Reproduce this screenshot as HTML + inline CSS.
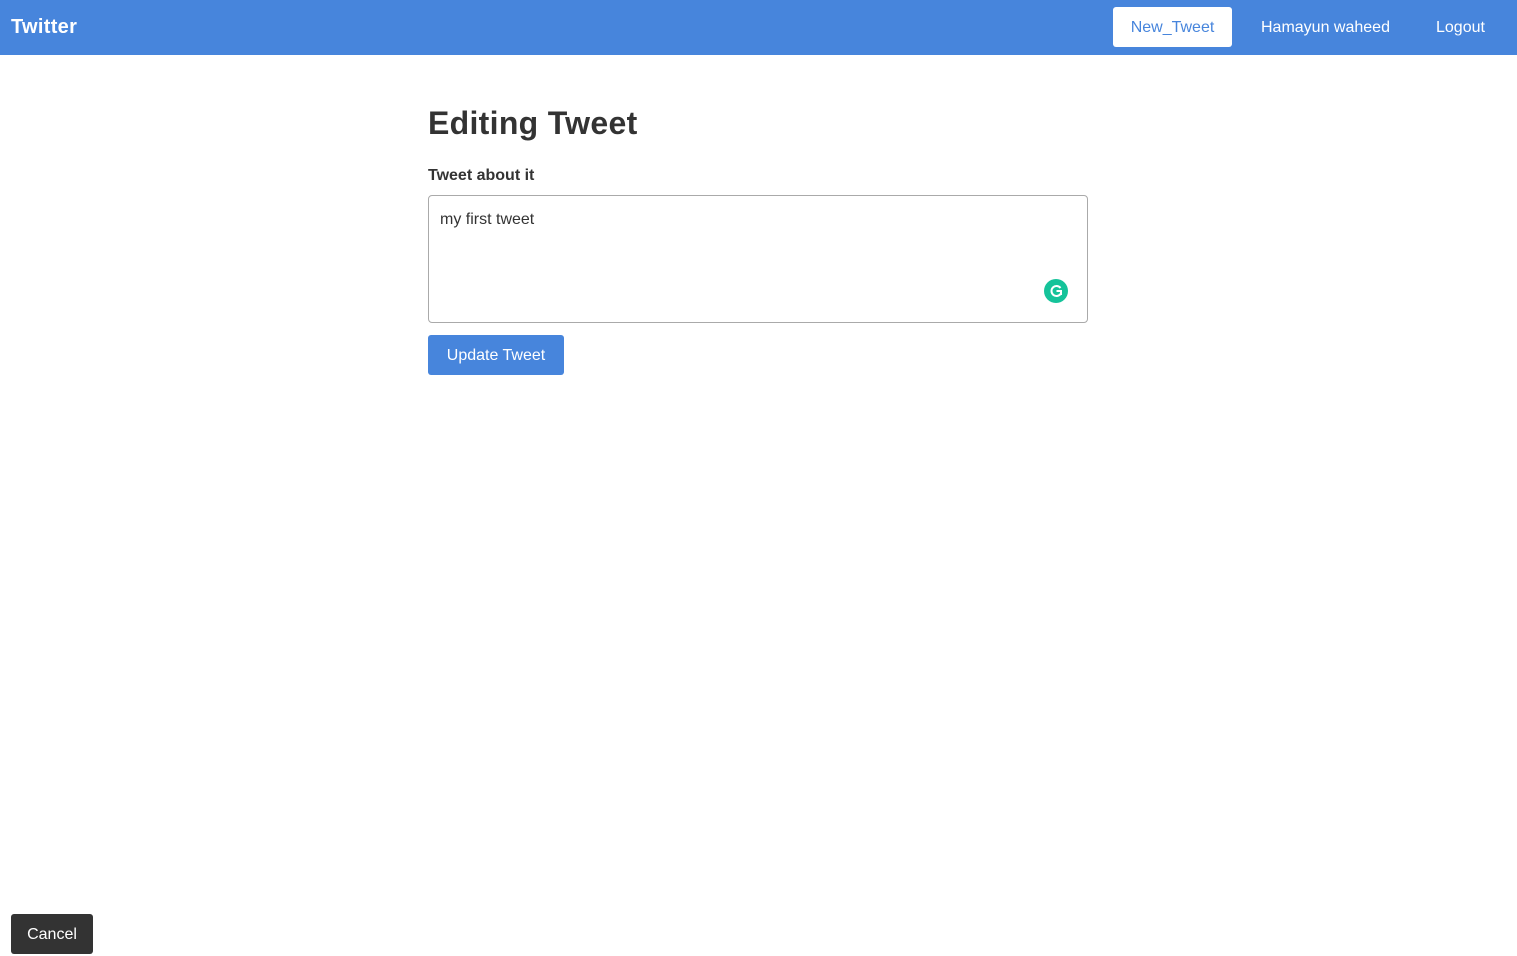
<!DOCTYPE html>
<html><head><style>
*{box-sizing:border-box;margin:0;padding:0}
body{width:1517px;height:955px;background:#fff;font-family:"Liberation Sans",sans-serif;color:#333;position:relative;overflow:hidden}
.nav{height:55px;background:#4785dc;position:relative}
.brand{position:absolute;left:11px;top:16px;color:#fff;font-weight:bold;font-size:20px;letter-spacing:0.3px}
.nt{position:absolute;left:1113px;top:7px;width:119px;height:40px;background:#fff;border-radius:3px;color:#4785dc;font-size:16px;text-align:center;line-height:42px}
.nl{position:absolute;top:19px;color:#fff;font-size:16px}
h1{position:absolute;left:428px;top:105px;font-size:32px;font-weight:bold;color:#333;letter-spacing:0.3px}
label{position:absolute;left:428px;top:167px;font-size:16px;font-weight:bold}
.ta{position:absolute;left:428px;top:195px;width:660px;height:128px;border:1px solid #aaa;border-radius:4px;padding:15px 11px;font-size:16px}
.g{position:absolute;left:1044px;top:279px;width:24px;height:24px;border-radius:50%;background:#15c39a}
.btn{position:absolute;left:428px;top:335px;width:136px;height:40px;background:#4785dc;color:#fff;font-size:16px;line-height:42px;text-align:center;border-radius:3px}
.cancel{position:absolute;left:11px;top:914px;width:82px;height:40px;background:#333;color:#fff;font-size:16px;line-height:42px;text-align:center;border-radius:3px}
</style></head><body>
<div class="nav"><div class="brand">Twitter</div>
<div class="nt">New_Tweet</div>
<div class="nl" style="left:1261px">Hamayun waheed</div>
<div class="nl" style="left:1436px">Logout</div></div>
<h1>Editing Tweet</h1>
<label>Tweet about it</label>
<div class="ta">my first tweet</div>
<div class="g"><svg width="24" height="24" viewBox="0 0 24 24"><path d="M16.5 9A5 5 0 1 0 16.5 15M12.5 12H17V16" fill="none" stroke="#fff" stroke-width="2"/></svg></div>
<div class="btn">Update Tweet</div>
<div class="cancel">Cancel</div>
</body></html>
